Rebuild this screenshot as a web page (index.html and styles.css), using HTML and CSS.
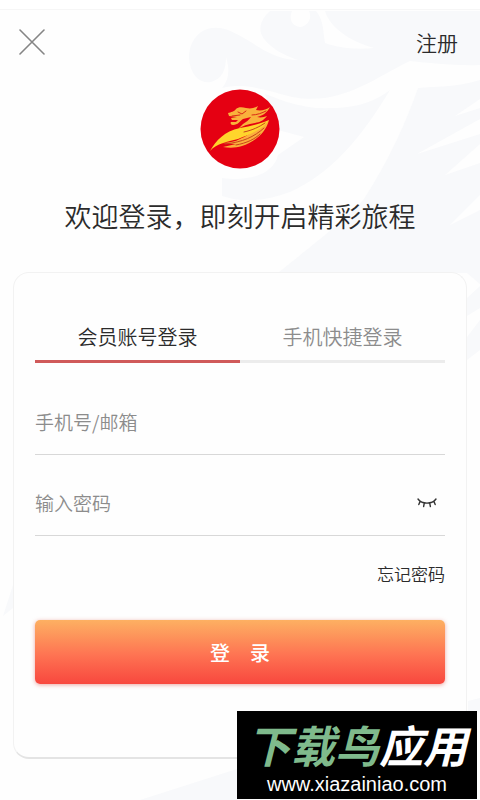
FILE: index.html
```html
<!DOCTYPE html>
<html lang="zh-CN">
<head>
  <meta charset="UTF-8" />
  <meta name="viewport" content="width=device-width, initial-scale=1.0"/>
  <title>会员登录</title>
  <link rel="stylesheet" href="styles.css">
</head>
<body>

  <!-- pale dragon behind the page -->
  <svg class="backdrop" viewBox="0 0 480 800" preserveAspectRatio="xMidYMin slice" aria-hidden="true">
    <path fill="#f8f9fb" d="M480 11H325C328 22 342 39 374 48C352 50 337 47 325 43C323 32 324 20 316 11H309C313 20 306 26 300 27C291 26 289 18 292 11H270C259 21 258 31 264 39C273 50 286 56 298 60C270 60 251 39 228 30C205 22 189 37 189 58C190 76 201 84 211 82C222 79 226 70 226 57C230 70 229 80 222 88C247 82 268 91 292 97C340 106 371 80 410 61C430 63 455 66 480 65Z"/>
    <path fill="#f8f9fb" d="M390 90C370 105 350 109 316 108C286 104 278 98 265 94L278 130L304 137L278 155C274 172 254 182 222 178L222 196C242 203 267 201 290 192C330 174 360 140 390 90Z"/>
    <path fill="#f8f9fb" d="M480 80C455 88 435 86 418 88C407 120 389 160 364 199C345 220 320 239 278 273H467L480 284V210L450 225L480 195V163L445 175L480 144V134L417 154L480 119V108L455 116L480 99Z"/>
    <path fill="#f8f9fb" d="M480 286L467 298V316L480 308ZM480 320L467 337V360L480 350ZM13 585L3 616L13 608ZM140 800L240 768V800ZM468 701L480 698V712L468 716Z"/>
  </svg>

  <div class="status-bar"></div>

  <header>
    <button type="button" class="close-btn" aria-label="关闭">
      <svg width="26" height="26" viewBox="0 0 26 26" fill="none" stroke="#858585" stroke-width="1.6" stroke-linecap="round">
        <path d="M1 1L25 25M25 1L1 25"/>
      </svg>
    </button>
    <a href="#register" class="register-link">注册</a>
  </header>

  <main>
    <div class="welcome">
      <svg class="logo" width="80" height="80" viewBox="0 0 80 80" aria-hidden="true">
        <circle cx="40" cy="40" r="39.5" fill="#e50012"/>
        <path fill="#f9b23c" d="M28 24C31 23 34 23 36 20C38 18 42 18 46 19C51 20 55 19 58 17L56 21C61 22 66 21 70 18C67 24 62 27 57 28C61 29 64 28 67 27C63 32 60 33 55 34C48 35 42 37 38 40L43 35C46 33 49 31 51 28L43 30C40 32 38 36 33 36C31 36 30 34 31 33L36 33L38 31L32 31L31 29L37 28L29 27Z"/>
        <path fill="#fbb03b" d="M69 31C66 44 54 53 42 57C36 59 29 59 23 58L36 55L22 54C34 54 40 50 46 47Z"/>
        <path fill="#ffd52c" d="M10 62C16 52 24 42 40 39C50 37 60 35 69 31C63 40 51 45 38 50C27 53 17 54 10 62Z"/>
        <path fill="none" stroke="#d92a16" stroke-width="1" stroke-linecap="round" d="M38 23L42 25L46 22M32 27L40 26M52 26C57 26 62 24 66 22"/>
        <path fill="none" stroke="#c8441c" stroke-width="1" stroke-linecap="round" d="M25 55C43 53 54 48 64 39M36 56C47 54 55 50 60 45M44 43C53 41 59 38 65 34"/>
      </svg>
      <h1>欢迎登录，即刻开启精彩旅程</h1>
    </div>

    <div class="form-box">
      <div class="tabs" role="tablist">
        <button type="button" class="tab active" role="tab" aria-selected="true">会员账号登录</button>
        <button type="button" class="tab" role="tab" aria-selected="false">手机快捷登录</button>
      </div>

      <form id="loginForm">
        <div class="field">
          <input type="text" id="account" placeholder="手机号/邮箱" aria-label="手机号/邮箱" />
        </div>
        <div class="field">
          <input type="password" id="password" placeholder="输入密码" aria-label="输入密码" />
          <button type="button" class="eye-btn" aria-label="显示密码">
            <svg width="20" height="12" viewBox="0 0 20 12" fill="none" stroke="#333" stroke-width="1.4" stroke-linecap="round">
              <path d="M1 3C5 8.500 15 8.500 19 3M3 5.500L1.800 8.500M7.300 7.200L6.600 10.500M12.700 7.200L13.400 10.500M17 5.500L18.200 8.500"/>
            </svg>
          </button>
        </div>
        <a href="#forgot" class="forgot-link">忘记密码</a>
        <button type="submit" class="submit-btn">登　录</button>
      </form>
    </div>
  </main>

  <div class="site-badge">
    <p class="site-name"><span>下载鸟</span>应用</p>
    <p class="site-url">www.xiazainiao.com</p>
  </div>

</body>
</html>
```

FILE: styles.css
```css
* {
  box-sizing: border-box;
}

body {
  margin: 0;
  min-height: 100vh;
  position: relative;
  overflow-x: hidden;
  font-family: "Noto Sans CJK SC", sans-serif;
  font-weight: 350;
  color: #2b2b2b;
  background-color: #fefefe;
}

button,
input {
  font-family: inherit;
  font-weight: inherit;
  padding: 0;
  border: none;
  background: none;
}

button {
  cursor: pointer;
}

a {
  color: inherit;
  text-decoration: none;
}

.backdrop {
  position: absolute;
  top: 0;
  left: 0;
  width: 100%;
  height: 100%;
  z-index: -1;
}

.status-bar {
  height: 10px;
  background: #fff;
  border-bottom: 1px solid #f6f6f6;
}

header {
  display: flex;
  justify-content: space-between;
  align-items: center;
  height: 64px;
  padding: 0 22px 0 19px;
}

.close-btn {
  display: flex;
}

.register-link {
  font-size: 21px;
}

.welcome {
  display: flex;
  flex-direction: column;
  align-items: center;
  gap: 27px;
  padding: 15px 0 36px;
}

.welcome h1 {
  margin: 0;
  font-size: 27px;
  line-height: 40px;
  font-weight: 350;
  white-space: nowrap;
}

.form-box {
  margin: 0 13px 41px;
  padding: 40px 21px 73px;
  background: #fefefe;
  border: 1px solid #f2f2f2;
  border-bottom: 2px solid #e4e4e4;
  border-radius: 16px;
}

.tabs {
  display: flex;
}

.tab {
  flex: 1;
  height: 50px;
  font-size: 20px;
  color: #8c8c8c;
  border-bottom: 3px solid #ececec;
}

.tab.active {
  color: #2b2b2b;
  border-bottom-color: #d05a5a;
}

#loginForm {
  display: flex;
  flex-direction: column;
  padding-top: 11px;
}

.field {
  display: flex;
  align-items: center;
  height: 81px;
  padding: 14px 8px 0 0;
  border-bottom: 1px solid #d8d8d8;
}

.field input {
  flex: 1;
  min-width: 0;
  height: 40px;
  font-size: 19px;
  outline: none;
}

.field input::placeholder {
  color: #8c8c8c;
  opacity: 1;
}

.eye-btn {
  display: flex;
}

.forgot-link {
  align-self: flex-end;
  margin: 24px 0 32px;
  font-size: 17px;
  line-height: 28px;
}

.submit-btn {
  height: 64px;
  border-radius: 5px;
  color: #fff;
  font-size: 20px;
  font-weight: 500;
  background: linear-gradient(#fdb062, #fe7352 55%, #f8473e);
  box-shadow: 0 1px 4px rgba(220, 80, 70, 0.5);
}

.site-badge {
  position: absolute;
  right: 3px;
  bottom: 1px;
  width: 240px;
  height: 88px;
  padding-top: 8px;
  background: #000;
  color: #fff;
  text-align: center;
}

.site-badge p {
  margin: 0;
}

.site-name {
  font-size: 44px;
  font-weight: 700;
  font-style: italic;
  line-height: 50px;
}

.site-name span {
  color: #7fba8c;
}

.site-url {
  font-family: "Liberation Sans", sans-serif;
  font-size: 20px;
  font-weight: 400;
  line-height: 30px;
}
```
